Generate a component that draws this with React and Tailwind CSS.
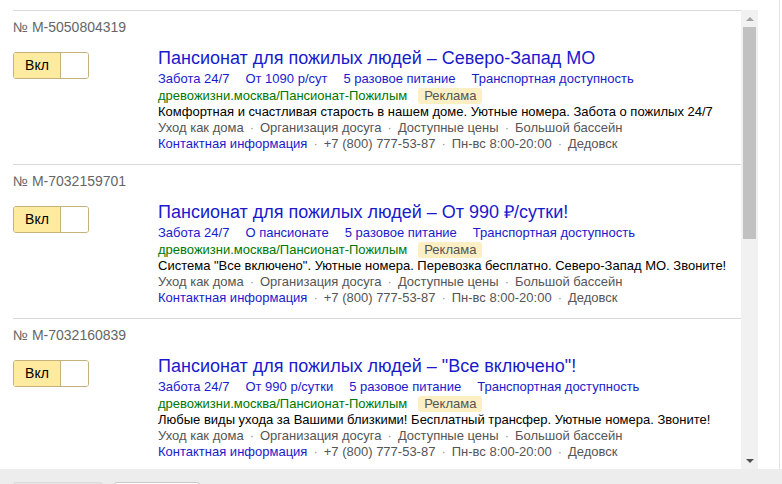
const ads = [
  {
    id: "№ M-5050804319",
    title: "Пансионат для пожилых людей – Северо-Запад МО",
    links: ["Забота 24/7", "От 1090 р/сут", "5 разовое питание", "Транспортная доступность"],
    text: "Комфортная и счастливая старость в нашем доме. Уютные номера. Забота о пожилых 24/7",
  },
  {
    id: "№ M-7032159701",
    title: "Пансионат для пожилых людей – От 990 ₽/сутки!",
    links: ["Забота 24/7", "О пансионате", "5 разовое питание", "Транспортная доступность"],
    text: 'Система "Все включено". Уютные номера. Перевозка бесплатно. Северо-Запад МО. Звоните!',
  },
  {
    id: "№ M-7032160839",
    title: 'Пансионат для пожилых людей – "Все включено"!',
    links: ["Забота 24/7", "От 990 р/сутки", "5 разовое питание", "Транспортная доступность"],
    text: "Любые виды ухода за Вашими близкими! Бесплатный трансфер. Уютные номера. Звоните!",
  },
];

const callouts = ["Уход как дома", "Организация досуга", "Доступные цены", "Большой бассейн"];
const contacts = ["+7 (800) 777-53-87", "Пн-вс 8:00-20:00", "Дедовск"];

function Dot() {
  return <span className="mx-[6px] text-[#999]">·</span>;
}

function Toggle() {
  return (
    <div className="mt-[4px] flex h-[27px] w-[76px] overflow-hidden rounded-[3px] border border-[#c4b27a]">
      <div className="flex w-[47px] items-center justify-center border-r border-[#c4b27a] bg-[#ffeba0] text-[14px] text-black">
        Вкл
      </div>
      <div className="flex-1 bg-white" />
    </div>
  );
}

function Ad({ ad }) {
  return (
    <div className="border-t border-[#d9d9d9] pt-[8px] pb-[12px]">
      <div className="h-[16px] text-[14px] leading-[16px] text-[#666]">{ad.id}</div>
      <div className="mt-[13px] flex">
        <div className="w-[145px] shrink-0">
          <Toggle />
        </div>
        <div className="min-w-0 flex-1">
          <div className="text-[18px] leading-[20px] text-[#1a1acc]">{ad.title}</div>
          <div className="mt-[3px] flex gap-[16px] text-[13px] leading-[16px] text-[#1a1acc]">
            {ad.links.map((l) => (
              <span key={l}>{l}</span>
            ))}
          </div>
          <div className="flex h-[17px] items-center text-[13px] leading-[16px]">
            <span className="text-[#070]">древожизни.москва/Пансионат-Пожилым</span>
            <span className="ml-[11px] rounded-[3px] bg-[#fcefc4] px-[6px] text-[#555]">Реклама</span>
          </div>
          <div className="text-[13px] leading-[16px] text-black">{ad.text}</div>
          <div className="text-[13px] leading-[16px] text-[#555]">
            {callouts.map((c, i) => (
              <span key={c}>
                {i > 0 && <Dot />}
                {c}
              </span>
            ))}
          </div>
          <div className="text-[13px] leading-[16px] text-[#555]">
            <span className="text-[#1a1acc]">Контактная информация</span>
            {contacts.map((c) => (
              <span key={c}>
                <Dot />
                {c}
              </span>
            ))}
          </div>
        </div>
      </div>
    </div>
  );
}

export default function App() {
  return (
    <div
      className="flex h-[484px] w-[782px] flex-col overflow-hidden bg-white"
      style={{ fontFamily: '"Liberation Sans", Arial, sans-serif' }}
    >
      <div className="flex h-[469px] shrink-0 pt-[10px]">
        <div className="flex-1 overflow-hidden pl-[13px]">
          {ads.map((ad) => (
            <Ad key={ad.id} ad={ad} />
          ))}
        </div>
        {/* scrollbar */}
        <div className="flex w-[17px] shrink-0 flex-col bg-[#f1f1f1]">
          <div className="flex h-[17px] items-center justify-center">
            <div className="h-0 w-0 border-x-[4px] border-b-[4px] border-x-transparent border-b-[#a3a3a3]" />
          </div>
          <div className="mx-[2px] h-[212px] bg-[#c1c1c1]" />
          <div className="flex-1" />
          <div className="flex h-[17px] items-center justify-center">
            <div className="h-0 w-0 border-x-[4px] border-t-[4px] border-x-transparent border-t-[#505050]" />
          </div>
        </div>
        <div className="-mt-[10px] w-[24px] shrink-0">
          <div className="ml-[21px] h-full border-l border-[#e3e3e3]" />
        </div>
      </div>
      <div className="flex flex-1 gap-[11px] bg-[#ededed] pt-[13px] pl-[13px]">
        <div className="h-[20px] w-[90px] rounded-[3px] border border-[#dcdcdc] bg-[#e4e4e4]" />
        <div className="h-[20px] w-[86px] rounded-[3px] border border-[#c8c8c8] bg-white" />
      </div>
    </div>
  );
}
